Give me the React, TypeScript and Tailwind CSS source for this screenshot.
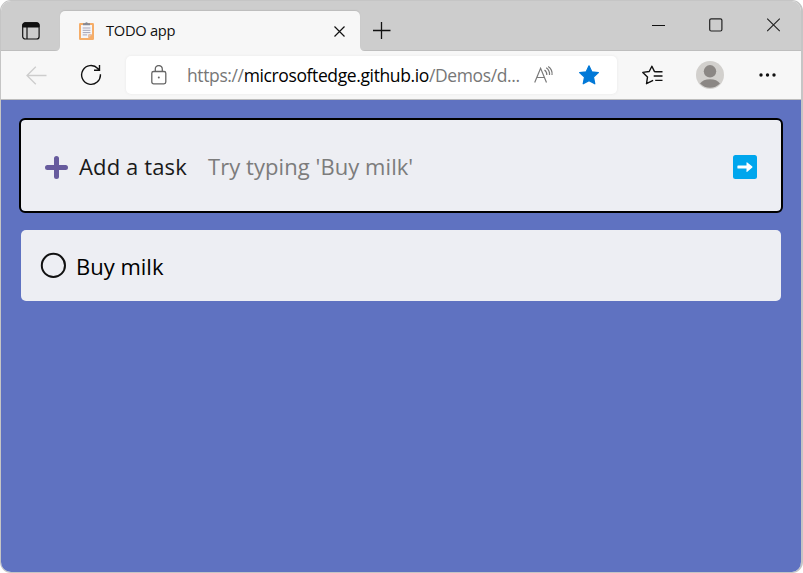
import React from "react";

function WorkspaceIcon() {
  return (
    <svg width="18" height="18" viewBox="0 0 18 18" className="shrink-0" fill="none" stroke="#111">
      <rect x="0.7" y="0.8" width="16.4" height="16.2" rx="2.6" strokeWidth="1.2" />
      <path d="M.8 5V3Q.8.8 3 .8h11.8Q17 .8 17 3v2Z" fill="#111" />
      <path d="M5 5v12" strokeWidth="1.2" />
    </svg>
  );
}

function ClipboardIcon() {
  return (
    <svg width="15" height="18" viewBox="0 0 15 18" className="mb-px shrink-0">
      <rect x="0" y="1" width="15" height="17" rx="1.3" fill="#f6ad68" />
      <path d="M2 3h11v9.5L9.5 16H2Z" fill="#f5f5f8" />
      <path d="M9.5 16v-3.5H13Z" fill="#d8814a" />
      <path d="M9.5 12.5H13L9.5 16Z" fill="#e8c6ac" />
      <path d="M4 3.2V1.2h2Q7.5-.8 9 1.2h2v2Z" fill="#858994" />
      <path d="M3.7 6h7.7M3.7 8.3h7.7M3.7 10.6h7.7M3.7 12.9h4.5" stroke="#a6a4b7" strokeWidth="1" />
    </svg>
  );
}

function TitleBar() {
  return (
    <div className="flex h-[50px] shrink-0 items-start border-b border-[#bebebe] bg-[#cdcdcd]">
      <div className="ml-[21px] mt-[21px] flex w-[38px]">
        <WorkspaceIcon />
      </div>
      <div className="relative mt-[10px] flex h-[40px] w-[300px] items-center rounded-t-[5px] bg-[#f7f7f7] pl-[19px] pr-[15px] shadow-[0_-1px_1px_#bdbdbd]">
        <svg className="absolute -left-[5px] bottom-0" width="5" height="5" viewBox="0 0 5 5">
          <path d="M5 0v5H0Q5 5 5 0Z" fill="#f7f7f7" />
        </svg>
        <svg className="absolute -right-[5px] bottom-0" width="5" height="5" viewBox="0 0 5 5">
          <path d="M0 0v5h5Q0 5 0 0Z" fill="#f7f7f7" />
        </svg>
        <ClipboardIcon />
        <span className="mb-[3px] ml-[12px] text-[14.7px] leading-5 tracking-[-0.3px] text-[#111]">TODO app</span>
        <svg className="ml-auto mt-px" width="11" height="11" viewBox="0 0 11 11" stroke="#111" strokeWidth="1.2">
          <path d="M.5.5l10 10M10.5.5l-10 10" />
        </svg>
      </div>
      <svg className="ml-[13px] mt-[20px]" width="18" height="18" viewBox="0 0 18 18" stroke="#111" strokeWidth="1.3">
        <path d="M0 9.5h17.5M8.5 1v17" />
      </svg>
      <div className="ml-auto mr-[20px] flex h-[49px] items-center gap-[44px] pb-px">
        <svg width="13" height="13" viewBox="0 0 13 13" stroke="#111" strokeWidth="1">
          <path d="M0 6.5h13" />
        </svg>
        <svg width="14" height="14" viewBox="0 0 14 14" fill="none" stroke="#222" strokeWidth="1.2">
          <rect x=".7" y=".8" width="12.2" height="12.2" rx="1.5" />
        </svg>
        <svg width="14" height="14" viewBox="0 0 14 14" stroke="#222" strokeWidth="1.1">
          <path d="M.2.6l12.6 12.6M12.8.6L.2 13.2" />
        </svg>
      </div>
    </div>
  );
}

function AddressBar() {
  return (
    <div className="ml-[24px] flex h-[38px] w-[491px] items-center rounded-[5px] bg-white pl-[25px] pr-[17px] shadow-[0_0_3px_#e8e8e8]">
      <svg width="16" height="20" viewBox="0 0 16 20" className="mb-px shrink-0" fill="none" stroke="#666" strokeWidth="1.3">
        <rect x=".8" y="6.5" width="14" height="12.3" rx="1.8" />
        <path d="M4.3 6.5V4a3.5 3.5 0 0 1 7 0v2.5" />
        <circle cx="7.8" cy="12.6" r="1" fill="#666" stroke="none" />
      </svg>
      <span className="mb-px ml-[20px] w-[334px] whitespace-nowrap text-[17.5px] leading-6 tracking-[-0.38px] text-[#777]">
        https://<span className="text-black">microsoftedge.github.io</span>/Demos/d...
      </span>
      <svg width="20" height="18" viewBox="0 0 20 18" className="mb-px ml-[13px] shrink-0" fill="none" stroke="#7a7a7a" strokeWidth="1.2">
        <path d="M.7 16.5L6.6 2.3l5.9 14.2M2.8 11.5h7.6" />
        <path d="M10.5 4Q13 5.8 12.8 9M12.2 1.8Q16 4.5 15.5 9M14.2.5Q18.7 3.6 18 9" />
      </svg>
      <svg width="22" height="20" viewBox="0 0 22 20" className="ml-auto shrink-0" fill="#0078d7" stroke="#0078d7" strokeWidth="1.2" strokeLinejoin="round">
        <path d="M11 .8l2.8 6 6.6.8-4.9 4.5 1.3 6.7L11 15.6l-5.8 3.2 1.3-6.7L1.6 7.6l6.6-.8Z" />
      </svg>
    </div>
  );
}

function ToolBar() {
  return (
    <div className="flex h-[49px] shrink-0 items-center border-b border-[#bdbdbd] bg-[#f7f7f7]">
      <svg width="21" height="19" viewBox="0 0 21 19" className="ml-[25px] shrink-0" fill="none" stroke="#cdcdcd" strokeWidth="1.3">
        <path d="M9.8.7L1 9.5l8.8 8.8M1 9.5h19.5" />
      </svg>
      <svg width="22" height="22" viewBox="0 0 22 22" className="ml-[33px] shrink-0" fill="none" stroke="#111" strokeWidth="1.4">
        <path d="M20.4 10.2A9.4 9.4 0 1 1 17.8 4.4L19.2 5.8M19.5 1v5.3H14" />
      </svg>
      <AddressBar />
      <svg width="21" height="20" viewBox="0 0 21 20" className="ml-[25px] shrink-0" fill="none" stroke="#111" strokeWidth="1.4" strokeLinejoin="round">
        <path d="M13.5 6.7l-1-.1L9.9 1.2 7.2 6.5.8 7.4l4.7 4.7-1 6.6 5.6-2.9 1-.5M13.5 6.7H20.5M11.7 11h8.8M13.2 15.4h7.3" />
      </svg>
      <svg width="28" height="28" viewBox="0 0 28 28" className="ml-[33px] shrink-0">
        <circle cx="14" cy="14" r="14" fill="#d2d0cd" />
        <circle cx="14" cy="10.3" r="6.2" fill="#8b8784" />
        <path d="M4 22.5Q7 18.2 14 18.2t10 4.3A14 14 0 0 1 4 22.5Z" fill="#8b8784" />
      </svg>
      <svg width="17" height="4" viewBox="0 0 17 4" className="ml-[35px] shrink-0" fill="#111">
        <circle cx="2" cy="2" r="1.7" />
        <circle cx="8.5" cy="2" r="1.7" />
        <circle cx="15" cy="2" r="1.7" />
      </svg>
    </div>
  );
}

function TodoPage() {
  return (
    <main className="flex flex-1 flex-col bg-[#5f72c1] px-[20px] pt-[20px] text-[22px] leading-[30px] text-[#1a1a1a]">
      <form className="flex h-[91px] items-center rounded-[4px] bg-[#edeef3] pl-[24px] pr-[24px] pt-[3px] outline-2 outline-black">
        <svg width="23" height="23" viewBox="0 0 23 23" className="shrink-0" stroke="#675b9d" strokeWidth="5" strokeLinecap="round">
          <path d="M2.5 11.5h18M11.5 2.5v18" />
        </svg>
        <label className="mb-[2px] ml-[11px] w-[129px] whitespace-nowrap tracking-[0.13px]">Add a task</label>
        <span className="mb-[2px] whitespace-nowrap tracking-[0.06px] text-[#7c7c7c]">Try typing 'Buy milk'</span>
        <svg width="24" height="24" viewBox="0 0 24 24" className="ml-auto shrink-0">
          <rect width="24" height="24" rx="2.5" fill="#00a6ed" />
          <path d="M5 10.5h8.5V7.8q0-1 .8-.3l5 4.1q.5.5 0 1l-5 4.1q-.8.7-.8-.3v-2.8H5q-.6 0-.6-.6v-1.9q0-.6.6-.6Z" fill="#fff" />
        </svg>
      </form>
      <div className="mt-[19px] flex h-[71px] items-center rounded-[5px] bg-[#edeef3] pl-[19px]">
        <svg width="27" height="27" viewBox="0 0 27 27" className="shrink-0" fill="none" stroke="#111" strokeWidth="2">
          <circle cx="13.4" cy="13.4" r="11.6" />
        </svg>
        <span className="ml-[9px] mt-px whitespace-nowrap text-black">Buy milk</span>
      </div>
    </main>
  );
}

export default function App() {
  return (
    <div className="h-[573px] w-[803px] overflow-hidden bg-white font-['Open_Sans','Noto_Sans',sans-serif]">
      <div className="flex h-full w-full flex-col overflow-hidden rounded-[11px] border border-r-2 border-[#c5c5c5]">
        <TitleBar />
        <ToolBar />
        <TodoPage />
      </div>
    </div>
  );
}
